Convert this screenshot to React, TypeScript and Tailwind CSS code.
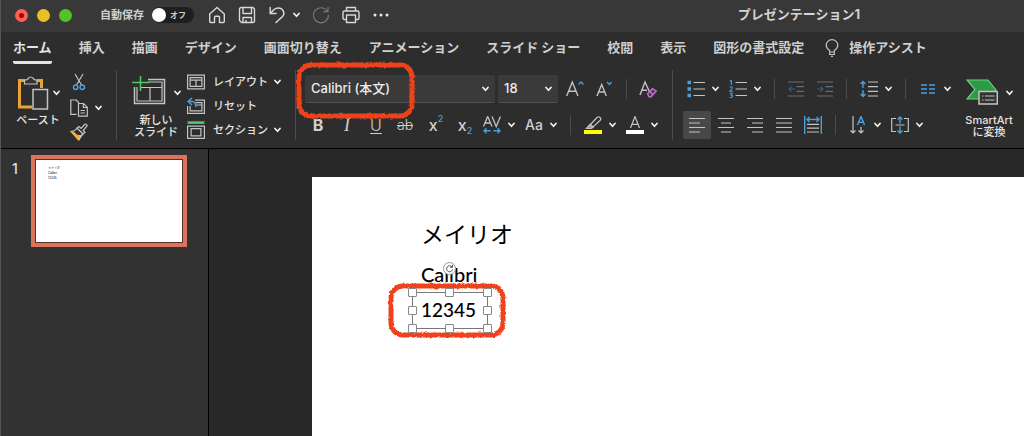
import { useState, type ReactNode } from "react";

const tabs = [
  "ホーム",
  "挿入",
  "描画",
  "デザイン",
  "画面切り替え",
  "アニメーション",
  "スライド ショー",
  "校閲",
  "表示",
  "図形の書式設定",
];

const GRAY = "#c4c4c4";
const BLUE = "#4a9fd8";

type IconProps = {
  w?: number;
  h?: number;
  stroke?: string;
  className?: string;
  children: ReactNode;
};

function Icon({ w = 18, h = 18, stroke = GRAY, className = "", children }: IconProps) {
  return (
    <svg
      width={w}
      height={h}
      viewBox={`0 0 ${w} ${h}`}
      fill="none"
      stroke={stroke}
      strokeWidth="1.2"
      className={`shrink-0 ${className}`}
      aria-hidden="true"
    >
      {children}
    </svg>
  );
}

function Chevron({ className = "" }: { className?: string }) {
  return (
    <Icon w={7} h={6} stroke="#f0f0f0" className={className}>
      <path d="M1 1.5 3.5 4.3 6 1.5" strokeWidth="1.7" strokeLinecap="round" strokeLinejoin="round" />
    </Icon>
  );
}

function Separator() {
  return <div className="h-5 w-px shrink-0 bg-[#4c4c4c]" />;
}

function Divider() {
  return <div className="h-[70px] w-px shrink-0 bg-[#4c4c4c]" />;
}

function SplitButton({ label, children }: { label: string; children: ReactNode }) {
  return (
    <button aria-label={label} className="flex h-7 shrink-0 items-center gap-[7px]">
      {children}
      <Chevron />
    </button>
  );
}

function TextButton({ label, children }: { label: string; children: ReactNode }) {
  return (
    <button
      aria-label={label}
      className="flex h-7 w-[26px] shrink-0 items-center justify-center text-base text-[#d0d0d0]"
    >
      {children}
    </button>
  );
}

// Text lines used by the paragraph alignment buttons
const alignments = [
  { label: "左揃え", d: "M1 2.5H17M1 7H12M1 11.5H17M1 16H12" },
  { label: "中央揃え", d: "M1 2.5H17M4 7H14M1 11.5H17M4 16H14" },
  { label: "右揃え", d: "M1 2.5H17M6 7H17M1 11.5H17M6 16H17" },
  { label: "両端揃え", d: "M1 2.5H17M1 7H17M1 11.5H17M1 16H17" },
];

// Hand-drawn marker frame
function Marker({ w, h, id, className }: { w: number; h: number; id: string; className: string }) {
  return (
    <svg
      width={w}
      height={h}
      viewBox={`0 0 ${w} ${h}`}
      fill="none"
      className={`pointer-events-none absolute z-10 ${className}`}
      aria-hidden="true"
    >
      <filter id={id} x="-5%" y="-10%" width="110%" height="120%">
        <feTurbulence type="fractalNoise" baseFrequency="0.35" numOctaves="2" seed="4" />
        <feDisplacementMap in="SourceGraphic" scale="3" xChannelSelector="R" yChannelSelector="G" />
      </filter>
      <rect
        x="4"
        y="4"
        width={w - 8}
        height={h - 8}
        rx="12"
        stroke="#ef431d"
        strokeWidth="5"
        filter={`url(#${id})`}
      />
    </svg>
  );
}

function TitleBar() {
  const [autoSave, setAutoSave] = useState(false);

  return (
    <header className="flex h-8 items-center bg-[#383838] pb-0.5 pl-3.5">
      <div className="flex shrink-0 gap-[9px]">
        <button aria-label="閉じる" className="flex size-[13px] items-center justify-center rounded-full bg-[#ff5f57]">
          <span className="size-[5px] rounded-full bg-[#8a0f0a]" />
        </button>
        <button aria-label="しまう" className="size-[13px] rounded-full bg-[#e6c029]" />
        <button aria-label="拡大" className="size-[13px] rounded-full bg-[#53c22b]" />
      </div>

      <label className="ml-7 flex shrink-0 items-center gap-2 text-[11px] font-bold text-[#cfcfcf]">
        自動保存
        <span className="relative flex h-4 w-[42px] items-center rounded-full bg-[#1f1f1f]">
          <input
            type="checkbox"
            role="switch"
            checked={autoSave}
            onChange={(e) => setAutoSave(e.target.checked)}
            className="peer absolute inset-0 appearance-none rounded-full"
          />
          <span className="size-3.5 rounded-full bg-white" />
          <span className="ml-1 text-[8px]">オフ</span>
        </span>
      </label>

      <div className="ml-3.5 flex shrink-0 items-center gap-3">
        <button aria-label="ホーム">
          <Icon stroke="#d8d8d8">
            <path
              d="M1.7 8 9 1.5 16.3 8V15.5Q16.3 16.5 15.3 16.5H11.5V11.5Q11.5 10.3 10.3 10.3H7.7Q6.5 10.3 6.5 11.5V16.5H2.7Q1.7 16.5 1.7 15.5Z"
              strokeLinejoin="round"
              strokeWidth="1.4"
            />
          </Icon>
        </button>
        <button aria-label="保存">
          <Icon stroke="#d8d8d8">
            <path
              d="M3.5 1.5H15L16.5 3V15Q16.5 16.5 15 16.5H3.5L1.5 14.5V3.5Q1.5 1.5 3.5 1.5ZM5 1.5V7.5H13.5V1.5M5 16.5V11.5H13.5V16.5M8 16V14"
              strokeLinejoin="round"
              strokeWidth="1.4"
            />
          </Icon>
        </button>
        <SplitButton label="元に戻す">
          <Icon stroke="#d8d8d8">
            <path d="M2.2 1.5V7.5H8M2.5 7.2 6 3.5Q10 .5 14 3.2 17.5 7 14.5 10.5L8 16.5" strokeWidth="1.5" strokeLinecap="round" />
          </Icon>
        </SplitButton>
        <button aria-label="やり直し" disabled>
          <Icon stroke="#777">
            <path d="M15.5 5.5A7.5 7.5 0 1 0 16.5 9M16 1V5.7H11.3" />
          </Icon>
        </button>
        <button aria-label="印刷">
          <Icon stroke="#d8d8d8">
            <path
              d="M4.5 5V1.5H13.5V5M4.5 13.5H2.5Q1 13.5 1 12V6.5Q1 5 2.5 5H15.5Q17 5 17 6.5V12Q17 13.5 15.5 13.5H13.5M4.5 9H13.5V16.5H4.5Z"
              strokeLinejoin="round"
              strokeWidth="1.4"
            />
          </Icon>
        </button>
        <button aria-label="その他">
          <Icon stroke="none">
            <g fill="#e8e8e8">
              <circle cx="3" cy="9" r="1.5" />
              <circle cx="9" cy="9" r="1.5" />
              <circle cx="15" cy="9" r="1.5" />
            </g>
          </Icon>
        </button>
      </div>

      <h1 className="min-w-0 grow pl-[184px] text-center text-[13px] font-bold whitespace-nowrap text-[#d4d4d4]">
        プレゼンテーション1
      </h1>
    </header>
  );
}

function TabBar() {
  const [active, setActive] = useState("ホーム");

  return (
    <nav className="flex h-8 items-stretch gap-[27px] pl-3 text-[13px] font-bold whitespace-nowrap text-[#cfcfcf]">
      {tabs.map((tab) => (
        <button
          key={tab}
          onClick={() => setActive(tab)}
          className={`shrink-0 border-b-3 pt-0.5 ${
            tab === active ? "rounded-b-xs border-[#e4e4e4] text-[#e4e4e4]" : "border-transparent"
          }`}
        >
          {tab}
        </button>
      ))}
      <button className="-ml-1.5 flex shrink-0 items-center gap-2.5 pb-px">
        <Icon w={14}>
          <path d="M4.7 13V11.5Q1.2 9 1.2 6.2A5.8 5.5 0 0 1 12.8 6.2Q12.8 9 9.3 11.5V13ZM4.7 13V15.5H9.3V13M6 17.3H8" />
        </Icon>
        操作アシスト
      </button>
    </nav>
  );
}

function ClipboardGroup() {
  return (
    <div className="flex shrink-0 gap-2 pr-3.5 pl-[13px]">
      <button className="flex w-12 flex-col items-center pt-1.5">
        <span className="flex items-center gap-1">
          <Icon w={32} h={34}>
            <path d="M8 4.5H2.5V31H15M20 4.5H24.5V12" stroke="#e8a33a" strokeWidth="3" />
            <path d="M7.5 8V4Q11 4 11 2.5 13.5-.5 16.5 2.5 16.5 4 20 4V8Z" fill="#333" />
            <path d="M16 13.5H30.5V33H16Z" fill="#333" strokeWidth="1.5" />
          </Icon>
          <Chevron />
        </span>
        <span className="mt-1 leading-3">ペースト</span>
      </button>
      <div className="flex flex-col">
        <button aria-label="切り取り" className="flex h-6 items-center">
          <Icon>
            <path d="M5 1 11.5 12M13 1 6.5 12" />
            <g stroke={BLUE} strokeWidth="1.5">
              <circle cx="5.7" cy="14.3" r="2.2" />
              <circle cx="12.3" cy="14.3" r="2.2" />
            </g>
          </Icon>
        </button>
        <SplitButton label="コピー">
          <Icon>
            <path d="M6.5 15.3H.8V1H6L9 3.7M6 1H7" />
            <path d="M8.5 4.5H13.5L17.3 8.3V17.2H8.5ZM13.3 4.7V8.5H17M10.5 11.5H15M10.5 14H15" />
          </Icon>
        </SplitButton>
        <button aria-label="書式のコピー" className="flex h-5 items-center">
          <Icon>
            <path d="M1.5 9 4.5 10Q7 14 12 12L8.5 17Z" fill="#edb04e" stroke="#edb04e" />
            <path d="M1 8.5Q5.5 8 7 5L13 11Q10.5 13 9 17M7 5 9 3.5 11.2 5.5 14.5 1.5Q16.5.5 17.2 2.7L13.2 7.5 15 9.3 13 11Z" />
          </Icon>
        </button>
      </div>
    </div>
  );
}

function SlidesGroup() {
  return (
    <div className="flex shrink-0 gap-1.5 px-3.5">
      <button className="flex w-[50px] flex-col items-center pt-1.5">
        <span className="flex items-center gap-2">
          <Icon w={34} h={34}>
            <path d="M16 3.5H32.5V27.5H2.5V11" strokeWidth="1.5" />
            <path d="M16 6H30V25H5V11M8 11.5H30M18 11.5V25" />
            <path d="M8.5-2V15M0 6.5H17" stroke="#52c66b" strokeWidth="1.6" />
          </Icon>
          <Chevron />
        </span>
        <span className="mt-1 leading-3">
          新しい
          <br />
          スライド
        </span>
      </button>
      <div className="flex flex-col">
        <button className="flex h-6 items-center gap-2">
          <Icon>
            <path d="M.6 2.1H17.4V15.9H.6ZM3.1 4.6H14.9V13.4H3.1ZM3 7.2H15M9 7.2V13.4" />
          </Icon>
          レイアウト
          <Chevron className="-ml-0.5" />
        </button>
        <button className="flex h-6 items-center gap-2">
          <Icon>
            <path d="M8 3.1H17.4V16.4H.6V9M9 5.6H14.9V13.9H3.1V9M9.5 8H15" />
            <path d="M5 1 1.2 4.5 5 8M1.5 4.5H5Q9 4.5 9 10" stroke={BLUE} strokeWidth="1.6" />
          </Icon>
          リセット
        </button>
        <button className="flex h-6 items-center gap-2">
          <Icon>
            <path d="M.6 1.6H17.4" stroke="#52c66b" strokeWidth="2.6" />
            <path d="M.6 5.1H17.4V17.4H.6ZM4.1 7.6H13.9V14.9H4.1Z" />
          </Icon>
          セクション
          <Chevron className="-ml-0.5" />
        </button>
      </div>
    </div>
  );
}

function FontGroup() {
  return (
    <div className="flex shrink-0 flex-col gap-2 pt-[5px] pr-3.5 pl-[9px]">
      <div className="flex items-center gap-2">
        <div className="flex gap-[3px]">
          <div className="relative flex items-center">
            <select
              aria-label="フォント"
              className="h-7 w-[190px] appearance-none rounded-xs border-b border-[#505050] bg-[#3a3a3a] pl-1.5 text-[13px] font-medium text-[#ececec]"
            >
              <option>Calibri (本文)</option>
            </select>
            <Chevron className="pointer-events-none absolute right-1.5" />
            <Marker w={121} h={59} id="marker-font" className="-top-3.5 -left-2.5" />
          </div>
          <div className="relative flex items-center">
            <select
              aria-label="フォント サイズ"
              className="h-7 w-[60px] appearance-none rounded-xs border-b border-[#505050] bg-[#3a3a3a] pl-1.5 text-[13px] font-medium text-[#ececec]"
            >
              <option>18</option>
            </select>
            <Chevron className="pointer-events-none absolute right-1.5" />
          </div>
        </div>
        <div className="flex items-center gap-3">
          <button aria-label="フォント サイズの拡大">
            <Icon>
              <path d="M.7 16 6.3 2 12 16M2.7 11.3H9.9" strokeWidth="1.4" />
              <path d="M12.5 4.5 15 2 17.5 4.5" stroke={BLUE} strokeWidth="1.4" />
            </Icon>
          </button>
          <button aria-label="フォント サイズの縮小">
            <Icon>
              <path d="M1 16 5.7 4.5 10.3 16M2.7 12H8.7" strokeWidth="1.4" />
              <path d="M11 2 13.3 4.5 15.6 2" stroke={BLUE} strokeWidth="1.4" />
            </Icon>
          </button>
          <Separator />
          <button aria-label="すべての書式をクリア">
            <Icon>
              <path d="M1 15 6 2 11 13M2.8 10.3H8" strokeWidth="1.4" />
              <path d="M8.5 13.7 13.5 8.7 17.2 11 12 16.8H10ZM10.8 11.5 14 14.5" stroke="#c46fd0" strokeWidth="1.4" fill="#553058" />
            </Icon>
          </button>
        </div>
      </div>

      <div className="flex items-center">
        <div className="flex gap-[3px]">
          <TextButton label="太字">
            <b>B</b>
          </TextButton>
          <TextButton label="斜体">
            <i className="font-['Liberation_Serif'] text-lg">I</i>
          </TextButton>
          <TextButton label="下線">
            <u className="font-light underline-offset-2">U</u>
          </TextButton>
          <TextButton label="取り消し線">
            <s className="text-sm font-light">ab</s>
          </TextButton>
          <TextButton label="上付き">
            <span className="pl-1 font-medium">x</span>
            <span className="pb-3 text-[9px] font-medium text-[#4a9fd8]">2</span>
          </TextButton>
          <TextButton label="下付き">
            <span className="pl-1 font-medium">x</span>
            <span className="pt-3 text-[9px] font-medium text-[#4a9fd8]">2</span>
          </TextButton>
        </div>
        <div className="ml-[7px] flex items-center gap-[13px]">
          <div className="flex gap-2.5">
            <SplitButton label="文字の間隔">
              <Icon>
                <path d="M.5 10.5 4.7 .5 9 10.5M2 7H7.5M9 .5 13.2 10.5 17.4 .5" strokeWidth="1.3" />
                <path d="M7.5 14.8H1M3.5 12.3 1 14.8 3.5 17.3M10.5 14.8H17M14.5 12.3 17 14.8 14.5 17.3" stroke={BLUE} strokeWidth="1.4" />
              </Icon>
            </SplitButton>
            <SplitButton label="文字種の変換">
              <span className="w-[18px] text-sm text-[#d0d0d0]">Aa</span>
            </SplitButton>
          </div>
          <Separator />
          <div className="flex gap-2.5">
            <SplitButton label="蛍光ペンの色">
              <Icon>
                <path d="M0 16H18" stroke="#ffff00" strokeWidth="4" />
                <path d="M6.5 8.5 13 1.5Q15 0 16 1.5 17.5 3 16 4.5L9 11Z" />
                <path d="M6 8.5 9 11.5 7 12.5H2.5Z" fill="#999" />
              </Icon>
            </SplitButton>
            <SplitButton label="フォントの色">
              <Icon>
                <path d="M0 16H18" stroke="#fff" strokeWidth="4" />
                <path d="M4.5 12 9 .5 13.5 12M6 8.3H12" />
              </Icon>
            </SplitButton>
          </div>
        </div>
      </div>
    </div>
  );
}

function ParagraphGroup() {
  const [align, setAlign] = useState("左揃え");

  return (
    <div className="flex shrink-0 flex-col gap-2 pt-[5px] pr-3.5 pl-2.5">
      <div className="flex items-center gap-[13px] pl-1">
        <div className="flex gap-2.5">
          <SplitButton label="箇条書き">
            <Icon>
              <path d="M6.5 2.5H18M6.5 9H18M6.5 15.5H18" />
              <path d="M.5 .8H4V4.3H.5ZM.5 7.3H4V10.8H.5ZM.5 13.8H4V17.3H.5Z" fill={BLUE} stroke="none" />
            </Icon>
          </SplitButton>
          <SplitButton label="段落番号">
            <Icon>
              <path d="M6.5 2.5H18M6.5 9H18M6.5 15.5H18" />
              <g stroke={BLUE} strokeWidth="1.1">
                <path d="M.8 1.2 2.3.3V5" />
                <path d="M.7 7.3Q2.3 6.2 3.3 7.3 3.7 8.5.7 11.2H4" />
                <path d="M.7 13.2H3.2L2 15Q3.8 15 3.5 16.3 3 18 .7 17.3" />
              </g>
            </Icon>
          </SplitButton>
        </div>
        <Separator />
        <div className="flex gap-[13px]">
          <button aria-label="インデントを減らす" disabled>
            <Icon w={16} stroke="#6c6c6c">
              <path d="M0 2H16M8.5 6.7H16M8.5 11.3H16M0 16H16" />
              <path d="M7 9H1M3.5 6.5 1 9 3.5 11.5" stroke="#365f7c" />
            </Icon>
          </button>
          <button aria-label="インデントを増やす" disabled>
            <Icon w={16} stroke="#6c6c6c">
              <path d="M0 2H16M8.5 6.7H16M8.5 11.3H16M0 16H16" />
              <path d="M0 9H6M3.5 6.5 6 9 3.5 11.5" stroke="#365f7c" />
            </Icon>
          </button>
        </div>
        <Separator />
        <SplitButton label="行間">
          <Icon>
            <path d="M8 2H18M8 6.7H18M8 11.3H18M8 16H18" />
            <path d="M3 8V1.5M.6 4 3 1.5 5.4 4M3 10V16.5M.6 14 3 16.5 5.4 14" stroke={BLUE} strokeWidth="1.4" />
          </Icon>
        </SplitButton>
        <Separator />
        <SplitButton label="段組み">
          <Icon>
            <path d="M2 5H8M2 9H8M2 13H8M10 5H16M10 9H16M10 13H16" stroke={BLUE} strokeWidth="1.4" />
          </Icon>
        </SplitButton>
      </div>

      <div className="flex items-center gap-2">
        <div className="flex gap-px">
          {alignments.map(({ label, d }) => (
            <button
              key={label}
              aria-label={label}
              onClick={() => setAlign(label)}
              className={`flex size-7 items-center justify-center rounded-xs ${align === label ? "bg-[#484848]" : ""}`}
            >
              <Icon>
                <path d={d} />
              </Icon>
            </button>
          ))}
          <button aria-label="均等割り付け" className="flex size-7 items-center justify-center">
            <Icon>
              <path d="M3 8.3H15M3 12.2H15M3 16H15" />
              <path d="M.7 0V18M17.3 0V18M3 3.5H15M5.5 1 3 3.5 5.5 6M12.5 1 15 3.5 12.5 6" stroke={BLUE} strokeWidth="1.4" />
            </Icon>
          </button>
        </div>
        <Separator />
        <div className="flex gap-2.5 pl-[5px]">
          <SplitButton label="文字列の方向">
            <Icon>
              <path d="M4 0V17M1.5 14.5 4 17 6.5 14.5M12 11V17M9.5 14.5 12 17 14.5 14.5" />
              <path d="M8.5 9 12 .5 15.5 9M9.7 6.3H14.3" stroke={BLUE} strokeWidth="1.5" />
            </Icon>
          </SplitButton>
          <SplitButton label="文字の配置">
            <Icon>
              <path d="M5 2.5H.7V15.5H5M13 2.5H17.3V15.5H13M4.5 9H13.5" />
              <path d="M9 7.5V1M6.5 3.5 9 1 11.5 3.5M9 10.5V17M6.5 14.5 9 17 11.5 14.5" stroke={BLUE} strokeWidth="1.4" />
            </Icon>
          </SplitButton>
        </div>
      </div>
    </div>
  );
}

function Ribbon() {
  return (
    <div className="flex h-[84px] items-stretch overflow-x-clip py-1.5 text-[11px] font-medium whitespace-nowrap text-[#e4e4e4]">
      <ClipboardGroup />
      <Divider />
      <SlidesGroup />
      <Divider />
      <FontGroup />
      <Divider />
      <ParagraphGroup />
      <button className="flex w-12 shrink-0 flex-col items-center pt-1.5">
        <span className="flex items-center gap-2">
          <Icon w={32} h={34}>
            <path d="M1 4H22L30 14 22 23H1L9 13.5Z" fill="#2c9b45" stroke="#6fd083" />
            <path d="M13 15.5H31.3V28H13Z" fill="#333" strokeWidth="1.5" />
            <path d="M16 20H17.5M19 20H28.5M16 24H17.5M19 24H28.5" />
          </Icon>
          <Chevron />
        </span>
        <span className="mt-1 leading-3">
          SmartArt
          <br />
          に変換
        </span>
      </button>
    </div>
  );
}

function SlideList() {
  return (
    <aside className="flex w-52 shrink-0 items-start border-r border-black bg-[#323232] pt-1.5 pl-[11px]">
      <span className="w-[19px] pt-1 text-sm font-medium text-[#e0e0e0]">1</span>
      <button aria-label="スライド 1" className="w-[156px] border-4 border-[#dc735c] bg-[#5a2f27] p-px">
        <span className="flex h-[82px] flex-col gap-px bg-white pt-1.5 pl-3 text-left text-[3px] leading-1 text-black">
          <span>メイリオ</span>
          <span>Calibri</span>
          <span>12345</span>
        </span>
      </button>
    </aside>
  );
}

// Resize handles around the selected text box
const handles = [
  "-top-[5px] -left-[5px]",
  "-top-[5px] left-8",
  "-top-[5px] -right-[5px]",
  "top-[13px] -left-[5px]",
  "top-[13px] -right-[5px]",
  "-bottom-[5px] -left-[5px]",
  "-bottom-[5px] left-8",
  "-bottom-[5px] -right-[5px]",
];

function SlideCanvas() {
  return (
    <main className="flex min-w-0 grow bg-[#282828] pt-7 pl-[103px]">
      <div className="relative grow overflow-hidden bg-white text-black">
        <p className="absolute top-[41px] left-[109px] text-[23px] whitespace-nowrap">メイリオ</p>
        <p className="absolute top-[83px] left-[109px] font-['Lato'] text-xl font-medium">Calibri</p>
        <Marker w={120} h={57} id="marker-text" className="top-[105px] left-[75px]" />
        <div className="absolute top-[115px] left-[100px] z-20 flex h-[37px] w-[76px] items-center border border-[#777] pl-2 font-['Lato'] text-[19px] font-medium">
          12345
          {handles.map((pos) => (
            <span key={pos} className={`absolute size-[9px] rounded-[1px] border border-[#888] bg-white ${pos}`} />
          ))}
          <span className="absolute -top-[31px] left-[30px] flex size-[13px] items-center justify-center rounded-full border border-[#999] bg-white">
            <Icon w={9} h={9} stroke="#555">
              <path d="M7 3A3 3 0 1 0 7.5 5.5M7.5.8V3.3H5" strokeWidth="1" />
            </Icon>
          </span>
        </div>
      </div>
    </main>
  );
}

export default function App() {
  return (
    <div className="flex min-h-screen flex-col overflow-hidden border-l border-[#555] bg-[#2d2d2d] font-['Inter','Noto_Sans_CJK_JP',sans-serif]">
      <TitleBar />
      <TabBar />
      <Ribbon />
      <div className="flex grow border-t border-black">
        <SlideList />
        <SlideCanvas />
      </div>
    </div>
  );
}
